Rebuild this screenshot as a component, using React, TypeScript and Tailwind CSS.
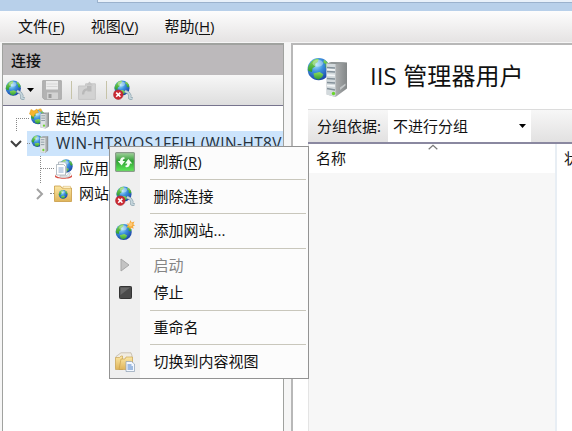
import { ReactNode } from 'react'

const Defs = () => (
  <svg className="absolute h-0 w-0" aria-hidden="true">
    <defs>
      <radialGradient id="sea" cx="38%" cy="30%" r="72%">
        <stop offset="0" stopColor="#a8e4fa" />
        <stop offset=".45" stopColor="#3c90de" />
        <stop offset="1" stopColor="#1b45a6" />
      </radialGradient>
      <linearGradient id="land" x1="0" y1="0" x2="0" y2="1">
        <stop offset="0" stopColor="#8fdc5a" />
        <stop offset="1" stopColor="#2a9a32" />
      </linearGradient>
      <linearGradient id="tower" x1="0" y1="0" x2="1" y2="0">
        <stop offset="0" stopColor="#c9cccd" />
        <stop offset=".5" stopColor="#a7aaab" />
        <stop offset="1" stopColor="#838788" />
      </linearGradient>
      <linearGradient id="folder" x1="0" y1="0" x2="0" y2="1">
        <stop offset="0" stopColor="#fbe7a4" />
        <stop offset="1" stopColor="#dfb45a" />
      </linearGradient>
      <linearGradient id="green" x1="0" y1="0" x2="0" y2="1">
        <stop offset="0" stopColor="#a5d3a0" />
        <stop offset=".45" stopColor="#2f9f33" />
        <stop offset="1" stopColor="#5fec58" />
      </linearGradient>
    </defs>
  </svg>
)

// 16x16 globe, scaled by the caller
const Globe = ({ transform }: { transform?: string }) => (
  <g transform={transform}>
    <circle cx="8" cy="8" r="7.6" fill="url(#sea)" />
    <path d="M2 4.2C3.4 1.8 6 .7 8 .8L7.4 3 5.6 4.2 5.8 6 3.8 7.4 3.4 10 .9 9.2C.3 7.4.9 5.6 2 4.2Z" fill="url(#land)" />
    <path d="M4.4 11 8.6 10l2.6 1.4-.8 2-2.6 1.8-2.6-1.2Z" fill="url(#land)" />
    <path d="M11.6 1.6c2 .9 3.4 2.6 3.8 4.8l-1.2 1.2-1.6-1 .2-2-1.6-1Z" fill="url(#land)" />
    <ellipse cx="7.4" cy="4" rx="3.6" ry="2.4" fill="#fff" opacity=".35" />
  </g>
)

const Server = ({ transform }: { transform?: string }) => (
  <g transform={transform}>
    <path d="M0 1.5 3 0h6v14.5L5.5 17 0 16Z" fill="#9b9fa0" />
    <path d="M0 1.5h5.5V17L0 16Z" fill="#dde2e4" />
    <path d="M5.5 1.5 9 0v14.5L5.5 17Z" fill="url(#tower)" />
    <path d="M.8 3.5h4M.8 6h4M.8 8.5h4" stroke="#85929b" strokeWidth=".9" />
    <circle cx="3.7" cy="14" r="1.2" fill="#6fd331" />
  </g>
)

const Plug = () => (
  <>
    <path d="M12 11 15.5 13l1.5 2.5-.4 2.5 2.9.8" fill="none" stroke="#8ba3ae" strokeWidth="3" strokeLinejoin="round" />
    <path d="M12 11 15.5 13l1.5 2.5-.4 2.5 2.9.8" fill="none" stroke="#c6d6dd" strokeWidth="1.7" strokeLinejoin="round" />
  </>
)

const ConnectIcon = () => (
  <svg width="21" height="20" viewBox="0 0 21 20">
    <Globe transform="translate(.3 .2)" />
    <Plug />
  </svg>
)

const DisconnectIcon = () => (
  <svg width="21" height="20" viewBox="0 0 21 20">
    <Globe transform="translate(1 0)" />
    <Plug />
    <circle cx="5.3" cy="14.7" r="4.8" fill="#cb2a33" stroke="#a91f29" strokeWidth=".5" />
    <path d="m3.2 12.6 4.2 4.2m0-4.2-4.2 4.2" stroke="#fff" strokeWidth="1.6" />
  </svg>
)

const SaveIcon = () => (
  <svg width="20" height="20" viewBox="0 0 20 20">
    <path d="M.7.7h18.6v18.6H2.2L.7 17.8Z" fill="#b3b3b3" stroke="#a8a8a8" />
    <path d="M4 1h12v8.5H4Z" fill="#ececec" />
    <path d="M4.5 4h11M4.5 6.5h11" stroke="#d6d6d6" />
    <path d="M5 12.5h11V19H5Z" fill="#d2d2d2" />
    <path d="M6.5 14h3v4h-3Z" fill="#9b9b9b" />
  </svg>
)

const UpIcon = () => (
  <svg width="18" height="19" viewBox="0 0 18 19">
    <path d="M.6 5h7V2.8h9.800v15.600H.6Z" fill="#d2d2d2" stroke="#c6c6c6" />
    <path d="M4 13.500c0-4 2-6 5-6.200V5h4.500v5.500H9.400V9.500C7.500 9.500 6.500 11 6.200 13.500Z" fill="#b9b9b9" />
    <path d="m8 4.500 3.500-4 3.500 4Z" fill="#c4c4c4" />
  </svg>
)

const HomeIcon = () => (
  <svg width="21" height="21" viewBox="0 0 21 21">
    <Globe transform="translate(1.5 1.5) scale(.95)" />
    <Server transform="translate(11.5 4.5) scale(.94)" />
    <path d="M.5 6 2 1.500l3 1.500 3-2 1.500 3.500L6 5.500 4.500 9Z" fill="#f5b52e" stroke="#d99417" strokeWidth=".5" />
    <path d="m9 1 3-.5 1.500 2.500-2.500 1Z" fill="#ecb23c" />
  </svg>
)

const ServerIcon = () => (
  <svg width="20" height="20" viewBox="0 0 22 21">
    <Globe transform="translate(.2 .5) scale(.85)" />
    <Server transform="translate(10 2) scale(.98 1.08)" />
  </svg>
)

const BigServerIcon = () => (
  <svg width="41" height="41" viewBox="0 0 41 41">
    <Globe transform="translate(0 .5) scale(1.46)" />
    <path d="m19.5 6.5 5-1.5L40 5.500v26L28.500 40 19.500 37.500Z" fill="url(#tower)" />
    <path d="M19.5 6.500 28.500 7V40L19.500 37.500Z" fill="#d3dadd" />
    <path d="m19.500 6.500 5-1.500L40 5.500 28.500 7Z" fill="#8e9495" />
    <path d="m20 10.500 8 .5M20 14.500l8 .5M20 21.500l8 .5M20 25.500l8 .5M20 31.500l8 1.500" stroke="#84919a" strokeWidth="1.3" />
    <path d="m20 12.500 8 .5M20 18l8 .5M20 28.500l8 .5" stroke="#f4f7f8" strokeWidth="1.5" />
    <path d="m33 30.500 5.500-4v2L33 33Z" fill="#c2c6c7" />
    <circle cx="26.5" cy="36.5" r="1.7" fill="#69d52b" />
  </svg>
)

const AppPoolIcon = () => (
  <svg width="20" height="20" viewBox="0 0 20 20">
    <Globe transform="translate(5 0) scale(.88)" />
    <path d="M1 15c0 5 17 5 17 0v2.500c0 3-17 3-17 0Z" fill="#d54a40" />
    <path d="M4.500 3h6l2 2v9h-8Z" fill="#f7f9fb" stroke="#9aa5ae" strokeWidth=".7" />
    <path d="M2.500 5.500h7l2 2v8.500h-9Z" fill="#fff" stroke="#9aa5ae" strokeWidth=".7" />
    <path d="M4.500 9h5M4.500 11h5M4.500 13h5" stroke="#7d9cc6" strokeWidth=".9" />
    <path d="M6 16.500h7l2-3 1.500.5-1.500 4H6Z" fill="#e8edf0" stroke="#a5acb1" strokeWidth=".5" />
  </svg>
)

const SitesIcon = () => (
  <svg width="18" height="17" viewBox="0 0 18 17">
    <path d="M.5 1h6l1.500 2h9.500v13.500H.5Z" fill="url(#folder)" stroke="#c99c45" strokeWidth=".8" />
    <path d="M9 1.300h7.500v2H9Z" fill="#fff5d2" stroke="#d5ad5a" strokeWidth=".5" />
    <Globe transform="translate(4.5 4.8) scale(.58)" />
  </svg>
)

const RefreshIcon = () => (
  <svg width="20" height="20" viewBox="0 0 20 20">
    <rect x=".6" y=".6" width="18.8" height="18.8" rx="1" fill="url(#green)" stroke="#8b9c8b" strokeWidth="1.2" />
    <path d="M9.500 5.500C7 4.800 5.300 6 5 9H2.800l3.800 4.500L10 9H7.800c0-1.500.7-2 1.700-2Z" fill="#f4fff2" />
    <path d="M10.500 15c2.500.7 4.200-.5 4.500-3.500h2.200L13.400 7 10 11.500h2.200c0 1.500-.7 2-1.700 2Z" fill="#f4fff2" />
  </svg>
)

const AddSiteIcon = () => (
  <svg width="20" height="21" viewBox="0 0 20 21">
    <Globe transform="translate(.2 3.5) scale(1.06)" />
    <path d="m15.500 0 1.100 2.600L19.500 1.500l-1.200 2.700 1.700 1.300-2 .8.700 2.400-2.300-1-1.200 1.800-1-2.200-2.700.3 1.700-2-1.500-2 2.500.1Z" fill="#f6a93b" />
    <circle cx="15.5" cy="4.6" r="2" fill="#ffc973" />
  </svg>
)

const StartIcon = () => (
  <svg width="10" height="14" viewBox="0 0 10 14">
    <path d="M1 1v12l8-6Z" fill="#c3c3c3" stroke="#a7a7a7" />
  </svg>
)

const StopIcon = () => (
  <svg width="13" height="13" viewBox="0 0 13 13">
    <rect x=".5" y=".5" width="12" height="12" rx=".8" fill="#4a4a4a" stroke="#333" />
    <path d="M1.500 9V1.500H11Z" fill="#686868" />
  </svg>
)

const ContentIcon = () => (
  <svg width="20" height="20" viewBox="0 0 20 20">
    <path d="M1 4.500 6 .8h10l1 3V16H1Z" fill="#f1ece0" stroke="#bbb2a0" strokeWidth=".7" />
    <path d="M.5 5.500h4L6 4h1.500v13.500H.5Z" fill="url(#folder)" stroke="#c49a45" strokeWidth=".6" />
    <path d="M6 7h4l1-2h6.500v12.500H4Z" fill="url(#folder)" stroke="#c49a45" strokeWidth=".6" />
    <path d="M11 9.500h5.500l3 2.500v7.500H11Z" fill="#f3f8ff" stroke="#8d9db1" strokeWidth=".7" />
    <path d="M12.500 13h4M12.500 15h5.500M12.500 17h5.500" stroke="#4b7ec4" />
  </svg>
)

const Caret = () => (
  <svg width="7" height="4" viewBox="0 0 7 4">
    <path d="M0 0h7L3.500 4Z" fill="#000" />
  </svg>
)

const Key = ({ children }: { children: ReactNode }) => (
  <span>
    (<span className="underline decoration-1 underline-offset-2">{children}</span>)
  </span>
)

const MenuItem = ({ icon, children, disabled }: { icon?: ReactNode; children: ReactNode; disabled?: boolean }) => (
  <div className={disabled ? 'flex h-[27.5px] items-center text-[#858585]' : 'flex h-[27.5px] items-center'}>
    <span className="flex w-[30px] shrink-0 items-center justify-center">{icon}</span>
    <span className="pl-[13.5px]">{children}</span>
  </div>
)

const Separator = () => (
  <div className="flex h-[7px] items-center pr-[2px] pl-10">
    <div className="h-px w-full bg-[#c9c7bc]" />
  </div>
)

const ContextMenu = () => (
  <div className="absolute top-[146px] left-[109px] h-[233px] w-[200px] border border-[#939393] bg-[linear-gradient(90deg,#efefef_30px,#fcfcfc_30px)] pt-px">
    <MenuItem icon={<RefreshIcon />}>刷新<Key>R</Key></MenuItem>
    <Separator />
    <MenuItem icon={<DisconnectIcon />}>删除连接</MenuItem>
    <Separator />
    <MenuItem icon={<AddSiteIcon />}>添加网站...</MenuItem>
    <Separator />
    <MenuItem icon={<StartIcon />} disabled>启动</MenuItem>
    <MenuItem icon={<StopIcon />}>停止</MenuItem>
    <Separator />
    <MenuItem>重命名</MenuItem>
    <Separator />
    <MenuItem icon={<ContentIcon />}>切换到内容视图</MenuItem>
  </div>
)

const Tree = () => (
  <div className="flex-1 overflow-hidden bg-white">
    <div className="flex h-[25px] items-center">
      <div className="mt-3 ml-[13px] h-[13px] w-[13px] shrink-0 border-t border-l border-dotted border-[#888]" />
      <span className="flex w-[22px] shrink-0"><HomeIcon /></span>
      <span className="ml-[5px]">起始页</span>
    </div>
    <div className="flex h-[25px] items-center">
      <svg className="ml-[7px] shrink-0" width="12" height="8" viewBox="0 0 12 8">
        <path d="m1 1 5 5 5-5" fill="none" stroke="#404040" strokeWidth="2" />
      </svg>
      <div className="ml-[5px] flex h-[25px] flex-1 items-center overflow-hidden bg-[#cce4fc]">
        <span className="mr-px ml-[-1px] h-px w-1 shrink-0 border-t border-dotted border-[#888]" />
        <span className="flex w-[20px] shrink-0"><ServerIcon /></span>
        <span className="ml-[5px] text-[15.4px] tracking-[0.44px] whitespace-nowrap text-[#26313b]">WIN-HT8VOS1FFIH (WIN-HT8V</span>
      </div>
    </div>
    <div className="flex">
      <div className="ml-[37px] h-[27px] w-px shrink-0 border-l border-dotted border-[#888]" />
      <div className="flex h-[25px] items-center">
        <span className="h-px w-[13px] border-t border-dotted border-[#888]" />
        <AppPoolIcon />
        <span className="ml-[5px]">应用</span>
      </div>
    </div>
    <div className="-mt-[2px] flex h-[25px] items-center">
      <svg className="ml-[33px]" width="8" height="12" viewBox="0 0 8 12">
        <path d="m1 1 5 5-5 5" fill="none" stroke="#a3a3a3" strokeWidth="2" />
      </svg>
      <span className="ml-[6px] h-px w-1 border-t border-dotted border-[#888]" />
      <SitesIcon />
      <span className="ml-[7px]">网站</span>
    </div>
  </div>
)

const Connections = () => (
  <div className="ml-[2px] flex w-[282px] shrink-0 flex-col border-t-2 border-r border-l border-[#a0a29f]">
    <div className="flex h-[30px] items-center bg-[#bcb9bb] pl-2 font-medium">连接</div>
    <div className="flex h-[31px] items-center border-b border-[#77748e] bg-gradient-to-b from-[#f7f7f7] to-[#dedede] pl-[2px]">
      <ConnectIcon />
      <span className="ml-px"><Caret /></span>
      <span className="ml-2 flex"><SaveIcon /></span>
      <span className="ml-[9px] h-[18px] w-px bg-[#c6c3a8]" />
      <span className="ml-[6px] flex"><UpIcon /></span>
      <span className="ml-[10px] h-[18px] w-px bg-[#c6c3a8]" />
      <span className="ml-[6px] flex"><DisconnectIcon /></span>
    </div>
    <Tree />
  </div>
)

const Content = () => (
  <div className="ml-[7px] flex min-w-0 flex-1 flex-col border-t-2 border-l-2 border-[#b8b8b8] bg-white">
    <div className="flex h-[64px] shrink-0 items-center pl-[14px]">
      <BigServerIcon />
      <h1 className="-mt-[2px] ml-[22px] text-[24px] leading-none tracking-[0.1px] whitespace-nowrap">IIS 管理器用户</h1>
    </div>
    <div className="ml-[15px] flex h-[35px] shrink-0 border-t border-b-2 border-t-[#dcdcdc] border-b-[#8a88a0] bg-gradient-to-b from-[#f7f7f7] to-[#e2e1e1]">
      <span className="flex w-20 shrink-0 items-center pl-[9px] whitespace-nowrap">分组依据:</span>
      <div className="flex w-[143px] items-center justify-between bg-white pr-[5px] pl-[5px]">
        <span>不进行分组</span>
        <Caret />
      </div>
    </div>
    <div className="ml-[15px] flex flex-1 overflow-hidden border-l border-[#e4e4e4]">
      <div className="flex w-[248px] shrink-0 flex-col border-r-2 border-[#e8eef4]">
        <div className="relative flex h-[29px] items-center pl-[7px]">
          名称
          <svg className="absolute top-0 left-[119px]" width="10" height="6" viewBox="0 0 10 6">
            <path d="m.7 5.300 4.300-4 4.300 4" fill="none" stroke="#777" strokeWidth="1.2" />
          </svg>
        </div>
        <div className="flex-1 bg-[#f7f7f7]" />
      </div>
      <div className="flex h-[29px] items-center pl-[7px] whitespace-nowrap">状</div>
    </div>
  </div>
)

export default function App() {
  return (
    <div className="relative flex h-[431px] w-[572px] flex-col overflow-hidden bg-[#f6f6f6] font-['Open_Sans','Noto_Sans_CJK_SC',sans-serif] text-[15px] leading-none text-[#111]">
      <Defs />
      <div className="h-[11px] shrink-0 bg-[#b8d0ea]">
        <div className="ml-[97px] h-[3px] border-b border-l border-[#9bb2cd] bg-[#e9f1fa]" />
      </div>
      <div className="flex h-[32px] shrink-0 items-center gap-[26px] border-b border-[#f5f5f5] bg-gradient-to-b from-[#fdfdfd] to-[#e5e3e3] pl-[18px]">
        <span>文件<Key>F</Key></span>
        <span>视图<Key>V</Key></span>
        <span>帮助<Key>H</Key></span>
      </div>
      <div className="flex min-h-0 flex-1">
        <Connections />
        <Content />
      </div>
      <ContextMenu />
    </div>
  )
}
